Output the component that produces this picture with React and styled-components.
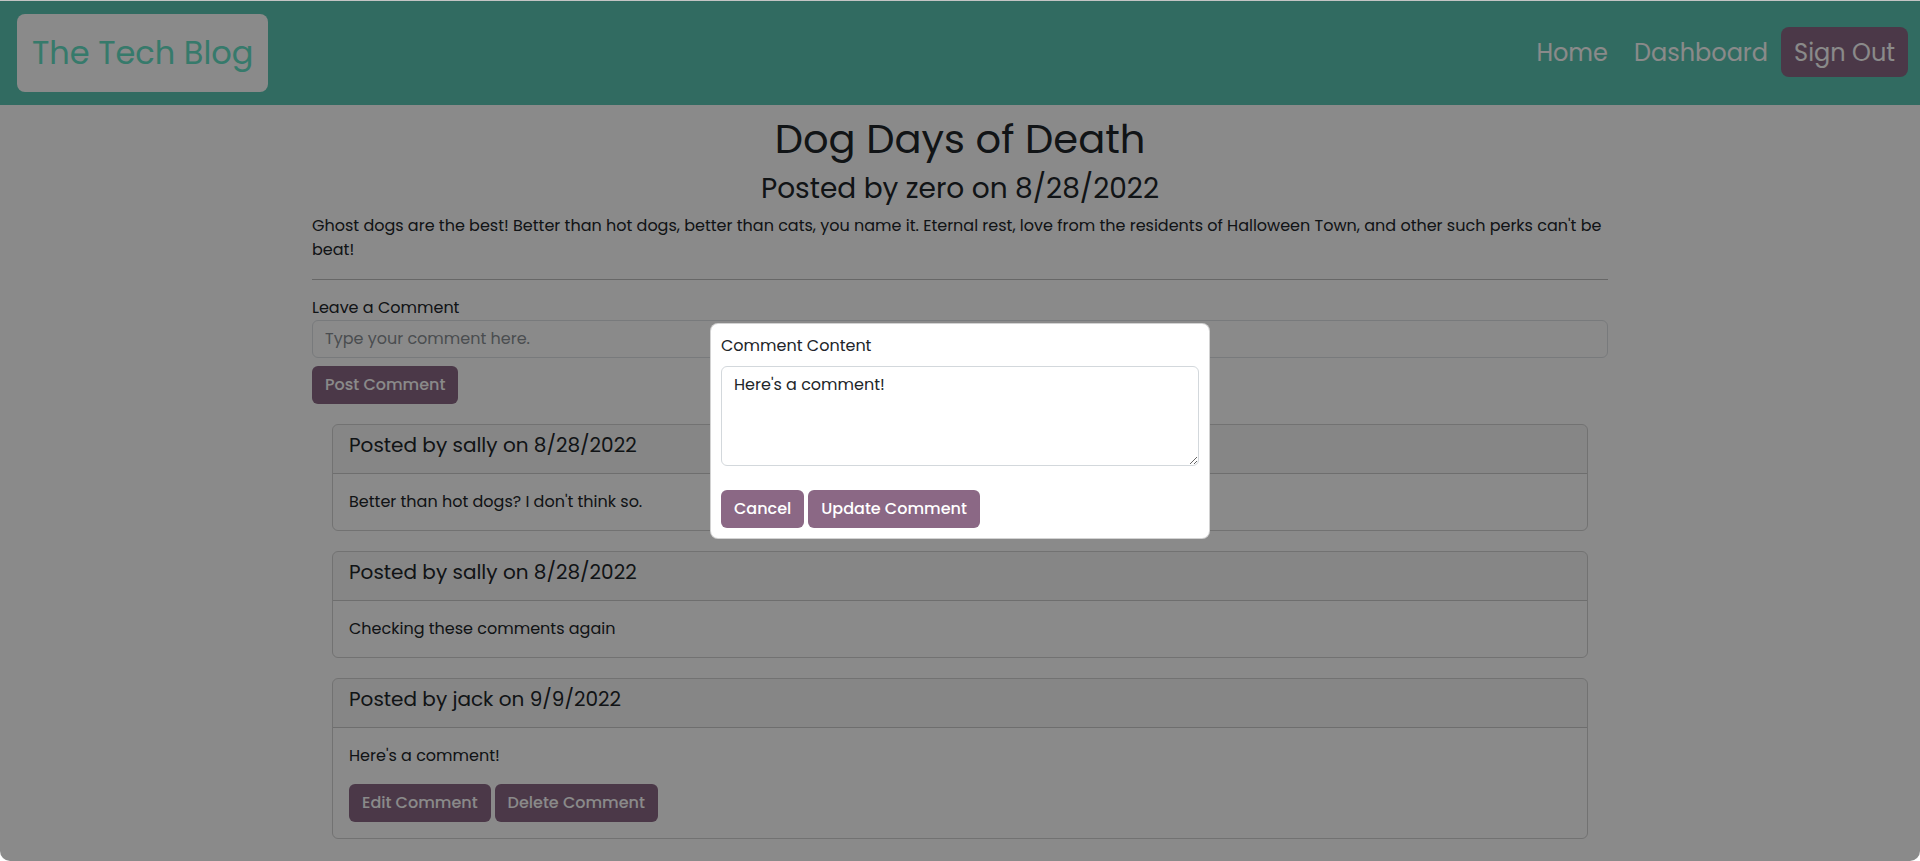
import React from 'react';
import styled, { createGlobalStyle } from 'styled-components';

const GlobalStyle = createGlobalStyle`
  * { box-sizing: border-box; }
  body {
    margin: 0;
    background: #ffffff;
    font-family: Poppins, Inter, "Open Sans", sans-serif;
    color: #212529;
  }
`;

// 창 전체 (아래 모서리가 둥근 브라우저 화면)
const Frame = styled.div`
  position: relative;
  height: 861px;
  overflow: hidden;
  background: #ffffff;
  border-top: 1px solid #c4c4c4;
  border-radius: 0 0 10px 10px;
`;

const Header = styled.header`
  height: 104px;
  background: #5cc6b3;
  display: flex;
  align-items: center;
  justify-content: space-between;
  padding: 0 12px 0 17px;
`;

const Logo = styled.a`
  display: flex;
  align-items: center;
  width: 251px;
  height: 78px;
  padding: 0 15px;
  background: #ffffff;
  border-radius: 8px;
  color: #64e1c6;
  font-size: 32px;
  text-decoration: none;
  white-space: nowrap;
`;

const Nav = styled.nav`
  display: flex;
  align-items: center;
  gap: 14px;
  margin-bottom: 2px;
`;

const NavLink = styled.a`
  color: #ffffff;
  font-size: 24px;
  text-decoration: none;
  padding: 0 6px;
  &:last-of-type { margin-right: -7px; }
`;

const SignOut = styled.button`
  height: 50px;
  padding: 0 13px;
  border: none;
  border-radius: 8px;
  background: #8b6885;
  color: #ffffff;
  font-family: inherit;
  font-size: 24px;
`;

const Container = styled.main`
  width: 1296px;
  margin: 0 auto;
`;

const Title = styled.h1`
  margin: 10px 0 0;
  text-align: center;
  font-size: 40px;
  font-weight: 400;
  line-height: 1.2;
`;

const Byline = styled.h3`
  margin: 9px 0 8px;
  text-align: center;
  font-size: 28px;
  font-weight: 400;
  line-height: 1.2;
`;

const Text = styled.p`
  margin: 0 0 ${({ gap }) => gap || 0}px;
  font-size: 16px;
  line-height: 24px;
`;

const Rule = styled.hr`
  margin: 0 0 16px;
  border: none;
  border-top: 1px solid rgba(0, 0, 0, 0.25);
`;

const Label = styled.label`
  display: block;
  font-size: 16px;
  line-height: 24px;
  margin-bottom: ${({ gap }) => gap || 0}px;
`;

const Input = styled.input`
  display: block;
  width: 100%;
  height: 38px;
  margin-top: 0;
  padding: 6px 12px;
  border: 1px solid #dee2e6;
  border-radius: 6px;
  font-family: inherit;
  font-size: 16px;
  &::placeholder { color: #8a8f94; }
`;

const Button = styled.button`
  height: 38px;
  padding: 0 13px;
  border: none;
  border-radius: 6px;
  background: #8b6885;
  color: #ffffff;
  font-family: inherit;
  font-size: 16px;
  font-weight: 500;
  line-height: 24px;
`;

const PostButton = styled(Button)`
  margin-top: 8px;
`;

const ButtonRow = styled.div`
  display: flex;
  gap: 4px;
`;

const CommentList = styled.section`
  display: flex;
  flex-direction: column;
  gap: 20px;
  margin-top: 20px;
  padding: 0 20px;
`;

const Card = styled.article`
  border: 1px solid rgba(0, 0, 0, 0.175);
  border-radius: 6px;
  overflow: hidden;
`;

const CardHeader = styled.div`
  padding: 8px 16px;
  background: rgba(0, 0, 0, 0.03);
  border-bottom: 1px solid rgba(0, 0, 0, 0.175);
`;

const CardTitle = styled.h5`
  margin: 0 0 8px;
  font-size: 20px;
  font-weight: 400;
  line-height: 1.2;
`;

const CardBody = styled.div`
  padding: 16px;
`;

// 모달 뒤 어두운 배경
const Backdrop = styled.div`
  position: absolute;
  inset: 0;
  background: rgba(0, 0, 0, 0.46);
  display: flex;
  align-items: center;
  justify-content: center;
`;

const Modal = styled.div`
  width: 500px;
  padding: 10px;
  background: #ffffff;
  border: 1px solid rgba(0, 0, 0, 0.175);
  border-radius: 8px;
`;

const TextArea = styled.textarea`
  display: block;
  width: 100%;
  height: 100px;
  margin-bottom: 24px;
  padding: 6px 12px;
  border: 1px solid #d3d8dc;
  border-radius: 6px;
  font-family: inherit;
  font-size: 16px;
  line-height: 24px;
  color: #212529;
`;

const comments = [
  { id: 1, author: 'sally', date: '8/28/2022', body: "Better than hot dogs? I don't think so." },
  { id: 2, author: 'sally', date: '8/28/2022', body: 'Checking these comments again' },
  { id: 3, author: 'jack', date: '9/9/2022', body: "Here's a comment!", mine: true },
];

const App = () => {
  return (
    <Frame>
      <GlobalStyle />
      <Header>
        <Logo href="#">The Tech Blog</Logo>
        <Nav>
          <NavLink href="#">Home</NavLink>
          <NavLink href="#">Dashboard</NavLink>
          <SignOut>Sign Out</SignOut>
        </Nav>
      </Header>

      <Container>
        <Title>Dog Days of Death</Title>
        <Byline>Posted by zero on 8/28/2022</Byline>
        <Text gap={17}>
          Ghost dogs are the best! Better than hot dogs, better than cats, you name it. Eternal rest, love from the
          residents of Halloween Town, and other such perks can't be beat!
        </Text>
        <Rule />

        <Label htmlFor="new-comment">Leave a Comment</Label>
        <Input id="new-comment" placeholder="Type your comment here." />
        <PostButton>Post Comment</PostButton>

        <CommentList>
          {comments.map((c) => (
            <Card key={c.id}>
              <CardHeader>
                <CardTitle>Posted by {c.author} on {c.date}</CardTitle>
              </CardHeader>
              <CardBody>
                <Text gap={c.mine ? 16 : 0}>{c.body}</Text>
                {c.mine && (
                  <ButtonRow>
                    <Button>Edit Comment</Button>
                    <Button>Delete Comment</Button>
                  </ButtonRow>
                )}
              </CardBody>
            </Card>
          ))}
        </CommentList>
      </Container>

      <Backdrop>
        <Modal>
          <Label gap={8}>Comment Content</Label>
          <TextArea defaultValue="Here's a comment!" />
          <ButtonRow>
            <Button>Cancel</Button>
            <Button>Update Comment</Button>
          </ButtonRow>
        </Modal>
      </Backdrop>
    </Frame>
  );
};

export default App;
